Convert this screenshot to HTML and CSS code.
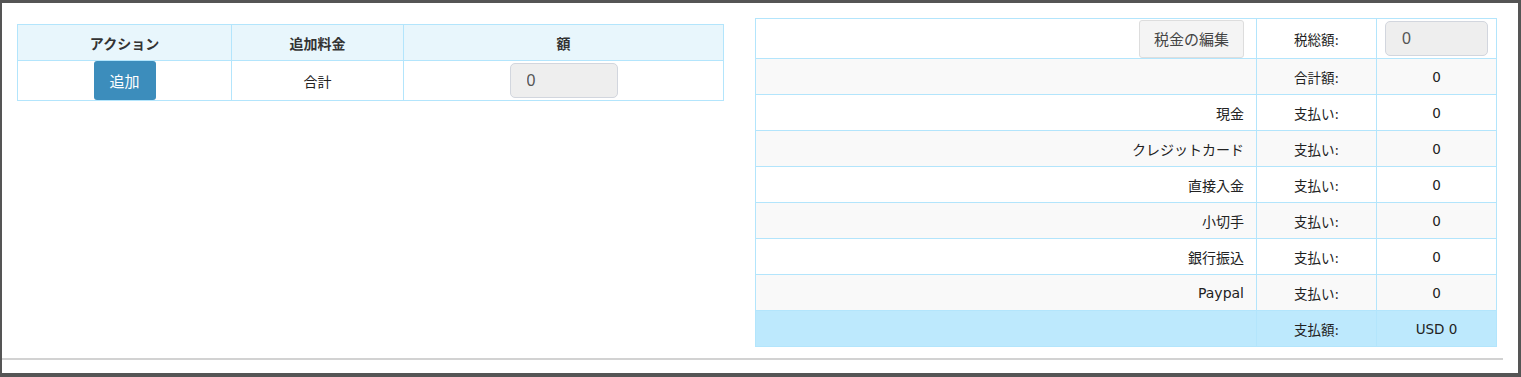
FILE: index.html
```html
<!DOCTYPE html>
<html>
<head>
  <title>支払い</title>
  <link rel="stylesheet" href="styles.css">
</head>
<body>
  <div class="frame">
    <div class="row">
      <div class="col-left">
        <table class="grid charges">
          <colgroup>
            <col class="w-action">
            <col class="w-extra">
            <col>
          </colgroup>
          <tr class="head">
            <th>アクション</th>
            <th>追加料金</th>
            <th>額</th>
          </tr>
          <tr>
            <td><button class="btn-add">追加</button></td>
            <td>合計</td>
            <td><input class="amount" type="text" value="0" readonly></td>
          </tr>
        </table>
      </div>

      <div class="col-right">
        <table class="grid totals">
          <colgroup>
            <col>
            <col class="w-key">
            <col class="w-key">
          </colgroup>
          <tr class="first">
            <td class="label"><button class="btn-edit">税金の編集</button></td>
            <td>税総額:</td>
            <td><input class="amount small" type="text" value="0" readonly></td>
          </tr>
          <tr class="alt">
            <td class="label"></td>
            <td>合計額:</td>
            <td>0</td>
          </tr>
          <tr>
            <td class="label">現金</td>
            <td>支払い:</td>
            <td>0</td>
          </tr>
          <tr class="alt">
            <td class="label">クレジットカード</td>
            <td>支払い:</td>
            <td>0</td>
          </tr>
          <tr>
            <td class="label">直接入金</td>
            <td>支払い:</td>
            <td>0</td>
          </tr>
          <tr class="alt">
            <td class="label">小切手</td>
            <td>支払い:</td>
            <td>0</td>
          </tr>
          <tr>
            <td class="label">銀行振込</td>
            <td>支払い:</td>
            <td>0</td>
          </tr>
          <tr class="alt">
            <td class="label">Paypal</td>
            <td>支払い:</td>
            <td>0</td>
          </tr>
          <tr class="total">
            <td class="label"></td>
            <td>支払額:</td>
            <td>USD 0</td>
          </tr>
        </table>
      </div>
    </div>
    <div class="rule"></div>
  </div>
</body>
</html>
```

FILE: styles.css
```css
html, body {
  margin: 0;
  padding: 0;
  background: #fff;
}

body {
  font-family: "DejaVu Sans", "Noto Sans CJK JP", sans-serif;
  font-size: 13.5px;
  color: #222;
}

.frame {
  box-sizing: border-box;
  width: 1521px;
  height: 377px;
  border-style: solid;
  border-color: #555;
  border-width: 3px 3px 4px 2px;
  background: #fff;
}

.row {
  display: flex;
  align-items: flex-start;
  padding: 15px 0 0 15px;
  height: 341px;
  box-sizing: border-box;
}

.col-left {
  width: 707px;
  margin-top: 6px;
}

.col-right {
  width: 742px;
  margin-left: 31px;
}

.grid {
  border-collapse: collapse;
  width: 100%;
  table-layout: fixed;
}

.grid th,
.grid td {
  border: 1px solid #b3e5fc;
  text-align: center;
  padding: 0;
}

.w-action { width: 214px; }
.w-extra { width: 172px; }
.w-key { width: 120px; }

.charges .head th {
  height: 35px;
  background: #e8f6fc;
  font-family: "Noto Sans CJK JP", sans-serif;
  font-size: 14px;
  font-weight: bold;
  color: #333;
}

.charges td {
  height: 39px;
  font-family: "Noto Sans CJK JP", sans-serif;
  font-size: 14px;
}

.btn-add {
  display: block;
  margin: 0 auto;
  width: 62px;
  height: 39px;
  border: none;
  border-radius: 3px;
  background: #3c8dbc;
  color: #fff;
  font-family: "Noto Sans CJK JP", sans-serif;
  font-size: 15px;
  cursor: pointer;
}

.amount {
  box-sizing: border-box;
  width: 108px;
  height: 35px;
  padding: 0 16px;
  border: 1px solid #d2d6de;
  border-radius: 5px;
  background: #eee;
  color: #555;
  font-family: "Liberation Sans", sans-serif;
  font-size: 16px;
  vertical-align: middle;
}

.amount.small {
  width: 103px;
}

.totals td {
  height: 35px;
}

.totals .first td {
  height: 39px;
}

.totals .label {
  text-align: right;
  padding-right: 12px;
  font-size: 14px;
}

.totals .alt td {
  background: #f9f9f9;
}

.totals .total td {
  background: #bde9fd;
}

.btn-edit {
  height: 38px;
  padding: 0 14px;
  border: 1px solid #ddd;
  border-radius: 3px;
  background: #f4f4f4;
  color: #444;
  font-family: "Noto Sans CJK JP", sans-serif;
  font-size: 15px;
  vertical-align: middle;
}

.rule {
  margin: 14px 15px 0 0;
  border-top: 2px solid #d2d2d2;
}
```
